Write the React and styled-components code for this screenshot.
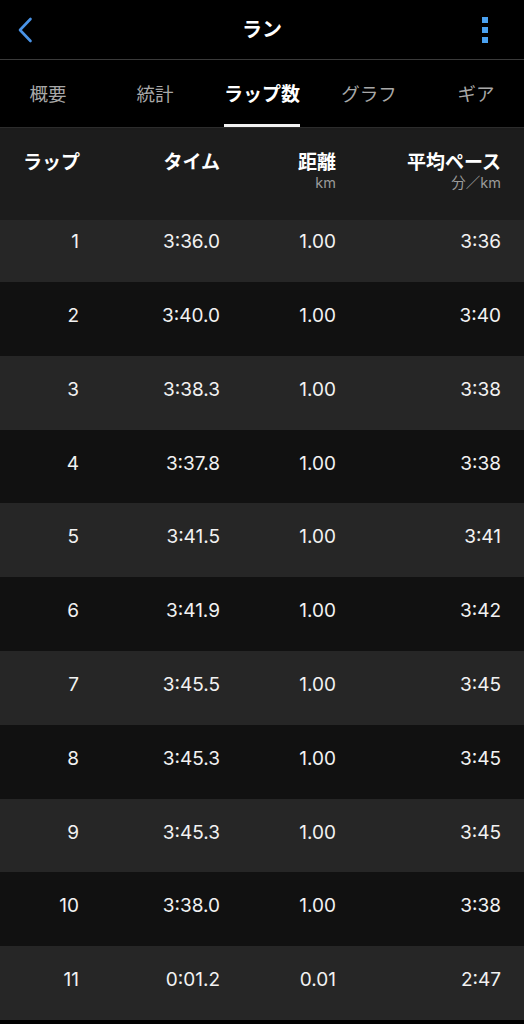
import React from "react";
import styled, { createGlobalStyle } from "styled-components";

const Global = createGlobalStyle`
  html, body { margin: 0; padding: 0; background: #000; }
  body { font-family: "Inter", "Noto Sans CJK JP", sans-serif; -webkit-font-smoothing: antialiased; }
`;

const Page = styled.div`
  width: 524px;
  height: 1024px;
  overflow: hidden;
  background: #000;
  color: #fff;
  font-family: "Inter", "Noto Sans CJK JP", sans-serif;
`;

const TopBar = styled.header`
  height: 59px;
  display: grid;
  grid-template-columns: 60px 1fr 60px;
  align-items: center;
  border-bottom: 1px solid #3a3a3a;
`;

const IconButton = styled.button`
  background: none;
  border: 0;
  padding: 0;
  height: 59px;
  display: flex;
  align-items: center;
  justify-content: ${(p) => (p.$end ? "flex-end" : "flex-start")};
  padding-left: ${(p) => (p.$end ? "0" : "17px")};
  padding-right: ${(p) => (p.$end ? "36px" : "0")};
`;

const Title = styled.h1`
  margin: 0;
  text-align: center;
  font-size: 20px;
  font-weight: 700;
  font-family: "Noto Sans CJK JP", sans-serif;
  line-height: 1;
  padding-bottom: 2px;
`;

const Dots = styled.div`
  display: flex;
  flex-direction: column;
  gap: 4px;
`;

const Dot = styled.span`
  width: 6px;
  height: 6px;
  background: #4aa1f0;
`;

const Tabs = styled.nav`
  height: 67px;
  display: grid;
  grid-template-columns: repeat(5, 107px);
  justify-content: center;
  overflow: hidden;
  border-bottom: 1px solid #2c2c2c;
`;

const Tab = styled.div`
  position: relative;
  display: flex;
  align-items: center;
  justify-content: center;
  padding-bottom: 2px;
  white-space: nowrap;
  font-family: "Noto Sans CJK JP", sans-serif;
  font-size: ${(p) => (p.$active ? "19px" : "18.5px")};
  font-weight: ${(p) => (p.$active ? 700 : 400)};
  color: ${(p) => (p.$active ? "#ffffff" : "#a8a8a8")};
  &::after {
    content: "";
    display: ${(p) => (p.$active ? "block" : "none")};
    position: absolute;
    left: 50%;
    bottom: 0;
    transform: translateX(-50%);
    width: 76px;
    height: 3px;
    background: #f2f2f2;
  }
`;

const COLS = "79px 141px 116px 165px";

const HeadRow = styled.div`
  height: 92px;
  background: #1c1c1c;
  display: grid;
  grid-template-columns: ${COLS};
  padding-right: 23px;
  align-items: start;
  padding-top: 20px;
  box-sizing: border-box;
`;

const HeadCell = styled.div`
  display: flex;
  flex-direction: column;
  white-space: nowrap;
  align-items: ${(p) => (p.$left ? "flex-start" : "flex-end")};
  padding-left: ${(p) => (p.$left ? "23px" : "0")};
`;

const HeadLabel = styled.span`
  font-family: "Noto Sans CJK JP", sans-serif;
  font-size: 19px;
  font-weight: 700;
  line-height: 25px;
  color: #fff;
`;

const HeadUnit = styled.span`
  font-family: "Inter", "Noto Sans CJK JP", sans-serif;
  font-size: 14.5px;
  line-height: 18px;
  margin-top: 1px;
  color: #9a9a9a;
`;

const Row = styled.div`
  height: ${(p) => (p.$clipped ? "62px" : "73.8px")};
  background: ${(p) => (p.$odd ? "#262626" : "#111111")};
  display: grid;
  grid-template-columns: ${COLS};
  padding-right: 23px;
  padding-top: ${(p) => (p.$clipped ? "11px" : "23px")};
  box-sizing: border-box;
  align-items: start;
`;

const Cell = styled.div`
  text-align: right;
  white-space: nowrap;
  font-size: 19px;
  line-height: 22px;
  color: #f2f2f2;
`;

const laps = [
  ["1", "3:36.0", "1.00", "3:36"],
  ["2", "3:40.0", "1.00", "3:40"],
  ["3", "3:38.3", "1.00", "3:38"],
  ["4", "3:37.8", "1.00", "3:38"],
  ["5", "3:41.5", "1.00", "3:41"],
  ["6", "3:41.9", "1.00", "3:42"],
  ["7", "3:45.5", "1.00", "3:45"],
  ["8", "3:45.3", "1.00", "3:45"],
  ["9", "3:45.3", "1.00", "3:45"],
  ["10", "3:38.0", "1.00", "3:38"],
  ["11", "0:01.2", "0.01", "2:47"],
];

export default function App() {
  return (
    <Page>
      <Global />
      <TopBar>
        <IconButton aria-label="戻る">
          <svg width="16" height="26" viewBox="0 0 16 26">
            <path d="M13.5 2 L3 13 L13.5 24" fill="none" stroke="#4a94e8" strokeWidth="2.6" strokeLinecap="round" strokeLinejoin="round" />
          </svg>
        </IconButton>
        <Title>ラン</Title>
        <IconButton $end aria-label="メニュー">
          <Dots>
            <Dot />
            <Dot />
            <Dot />
          </Dots>
        </IconButton>
      </TopBar>
      <Tabs>
        <Tab>概要</Tab>
        <Tab>統計</Tab>
        <Tab $active>ラップ数</Tab>
        <Tab>グラフ</Tab>
        <Tab>ギア</Tab>
      </Tabs>
      <HeadRow>
        <HeadCell $left>
          <HeadLabel>ラップ</HeadLabel>
        </HeadCell>
        <HeadCell>
          <HeadLabel>タイム</HeadLabel>
        </HeadCell>
        <HeadCell>
          <HeadLabel>距離</HeadLabel>
          <HeadUnit>km</HeadUnit>
        </HeadCell>
        <HeadCell>
          <HeadLabel>平均ペース</HeadLabel>
          <HeadUnit>分／km</HeadUnit>
        </HeadCell>
      </HeadRow>
      {laps.map((l, i) => (
        <Row key={l[0]} $odd={i % 2 === 0} $clipped={i === 0}>
          {l.map((v, j) => (
            <Cell key={j}>{v}</Cell>
          ))}
        </Row>
      ))}
    </Page>
  );
}
